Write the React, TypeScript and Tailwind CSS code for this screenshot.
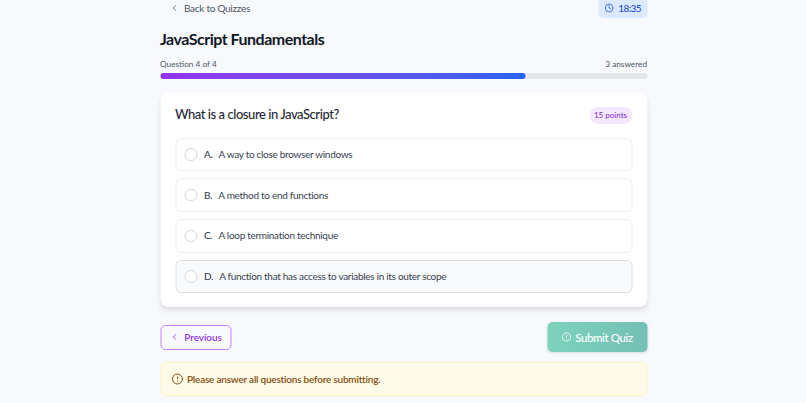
import { ChevronLeft, Clock, AlertCircle } from "lucide-react";

const options = [
  { letter: "A.", text: "A way to close browser windows" },
  { letter: "B.", text: "A method to end functions" },
  { letter: "C.", text: "A loop termination technique" },
  { letter: "D.", text: "A function that has access to variables in its outer scope", hover: true },
];

export default function App() {
  return (
    <div className="min-h-[403px] overflow-hidden bg-[#f8f9fc] font-['Lato',sans-serif]">
      <div className="mx-auto w-[487px] translate-x-[0.5px]">
        <div className="-mt-[2px] flex h-[20px] items-center justify-between">
          <button className="ml-[9px] flex items-center gap-[5px] text-[10px] tracking-[-0.27px] text-[#4b5563]">
            <ChevronLeft className="h-[10px] w-[10px]" />
            Back to Quizzes
          </button>
          <div className="flex h-[20px] w-[49px] items-center gap-[5px] rounded-[5px] bg-[#dbeafe] px-[6px] text-[10px] font-medium tracking-[-0.6px] text-[#1d4ed8]">
            <Clock className="h-[10px] w-[10px]" />
            18:35
          </div>
        </div>

        <h1 className="mt-[9px] text-[16px] leading-[24px] font-bold tracking-[-0.5px] text-[#111827]">JavaScript Fundamentals</h1>

        <div className="mt-[6px] flex justify-between text-[8.25px] leading-[14px] text-[#4b5563]">
          <span>Question 4 of 4</span>
          <span>3 answered</span>
        </div>
        <div className="mt-[2px] h-[6px] rounded-full bg-[#e5e7eb]">
          <div className="h-full w-[75%] rounded-full bg-gradient-to-r from-[#9333ea] to-[#2563eb]" />
        </div>

        <div className="mt-[14px] rounded-[8px] bg-white px-[15px] py-[14px] shadow-md">
          <div className="flex h-[16px] items-center justify-between">
            <h2 className="text-[13px] font-medium tracking-[-0.45px] text-[#1f2937]">What is a closure in JavaScript?</h2>
            <span className="flex h-[17px] w-[43px] items-center justify-center rounded-full bg-[#f3e8ff] text-[8px] text-[#7e22ce]">15 points</span>
          </div>
          <div className="mt-[14.5px] flex flex-col gap-[7.25px]">
            {options.map((o) => (
              <div
                key={o.letter}
                className={`flex h-[33.5px] items-center rounded-[5px] border px-[8.5px] text-[10px] tracking-[-0.3px] ${
                  o.hover ? "border-[#d9dce1] bg-[#f9fafb]" : "border-[#eceef1] bg-white"
                }`}
              >
                <span className="h-[12.5px] w-[12.5px] rounded-full border border-[#d1d5db] bg-white" />
                <span className="ml-[7px] font-medium text-[#374151]">{o.letter}</span>
                <span className="ml-[6px] text-[#374151]">{o.text}</span>
              </div>
            ))}
          </div>
        </div>

        <div className="mt-[15px] flex items-center justify-between">
          <button className="flex h-[25px] w-[71px] items-center justify-center gap-[5px] rounded-[5px] border border-[#c084fc] text-[10px] font-semibold tracking-[-0.1px] text-[#9333ea]">
            <ChevronLeft className="h-[10px] w-[10px]" />
            Previous
          </button>
          <button className="flex h-[30px] w-[100px] items-center justify-center gap-[4px] rounded-[5px] bg-gradient-to-r from-[#7dd3bb] to-[#74bfb5] text-[11.5px] font-medium tracking-[-0.4px] text-white shadow-sm">
            <AlertCircle className="h-[10px] w-[10px]" />
            Submit Quiz
          </button>
        </div>

        <div className="mt-[10px] flex h-[33.5px] items-center gap-[4px] rounded-[5px] border border-[#fef3c7] bg-[#fefce8] px-[10px] text-[10px] font-semibold tracking-[-0.22px] text-[#854d0e]">
          <AlertCircle className="h-[12px] w-[12px]" />
          Please answer all questions before submitting.
        </div>
      </div>
    </div>
  );
}
